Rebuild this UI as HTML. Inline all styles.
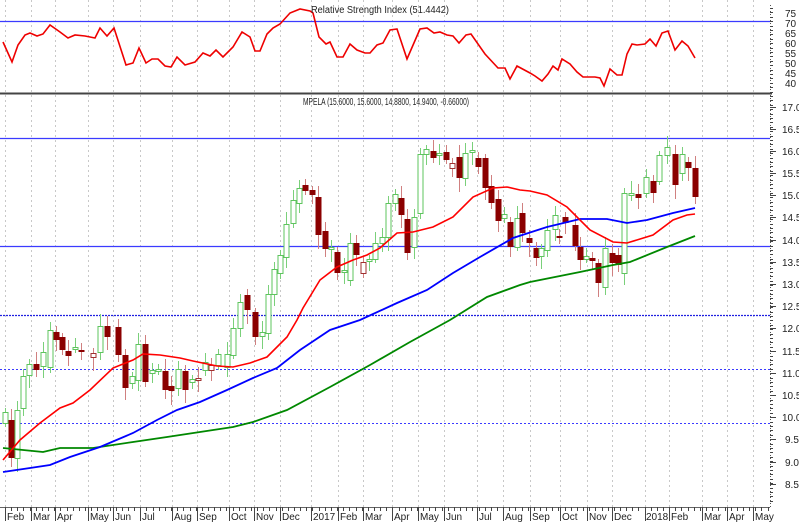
<!DOCTYPE html>
<html><head><meta charset="utf-8"><style>
html,body{margin:0;padding:0;background:#fff;width:799px;height:523px;overflow:hidden}
svg{display:block}
text{font-family:"Liberation Sans",Arial,sans-serif;font-size:10px;fill:#222}
</style></head><body>
<svg id="c" width="799" height="523" viewBox="0 0 799 523" xmlns="http://www.w3.org/2000/svg">
<rect width="799" height="523" fill="#fff"/>
<g id="grid" stroke="#c8c8c8" stroke-width="1" stroke-dasharray="2,3"></g>
<line x1="0" y1="21.5" x2="770" y2="21.5" stroke="#3b3bff" stroke-width="1.3"/>
<line x1="0" y1="93.5" x2="772" y2="93.5" stroke="#444" stroke-width="2"/>
<line x1="0" y1="138.5" x2="770" y2="138.5" stroke="#3b3bff" stroke-width="1.3"/>
<line x1="0" y1="246.5" x2="770" y2="246.5" stroke="#3b3bff" stroke-width="1.3"/>
<line x1="0" y1="315.5" x2="770" y2="315.5" stroke="#2020e0" stroke-width="1.3" stroke-dasharray="2,1"/>
<line x1="0" y1="369.5" x2="770" y2="369.5" stroke="#3b3bff" stroke-width="1" stroke-dasharray="2,2"/>
<line x1="0" y1="423.5" x2="770" y2="423.5" stroke="#3b3bff" stroke-width="1" stroke-dasharray="2,2"/>
<line x1="0" y1="507.5" x2="770" y2="507.5" stroke="#666"/>
<line x1="770.5" y1="5" x2="770.5" y2="507" stroke="#555" stroke-dasharray="1,2"/>
<g id="cand"></g>
<polyline fill="none" stroke="#e00" stroke-width="1.6" points="3,42 12,62 18,45 25,35 30,33 37,36 43,34 50,25 60,32 68,38 75,35 85,36 95,38 100,28 107,36 114,28 126,65 133,63 139,48 146,63 152,59 158,59 165,66 171,67 177,57 185,65 195,62 203,53 210,56 216,50 223,57 233,47 242,32 250,37 255,51 260,51 267,34 273,28 280,24 290,13 300,9 310,11 313,13 319,37 326,44 330,42 337,57 343,57 350,44 357,50 365,53 370,53 377,45 383,43 390,30 397,29 407,59 420,29 427,28 434,33 440,32 447,35 453,36 459,43 466,35 471,34 485,54 498,68 505,68 510,79 517,66 530,73 535,76 542,81 548,74 553,66 558,70 562,59 570,64 577,72 583,77 595,77 600,78 604,86 610,69 617,75 622,75 627,54 632,44 637,45 645,44 650,39 656,46 662,33 668,31 675,50 682,41 688,46 695,58"/>
<polyline fill="none" stroke="#080" stroke-width="1.8" points="3,448 43,452 60,448 93,448 133,442 167,437 200,432 233,427 253,422 287,410 330,387 370,365 410,342 450,320 487,297 520,285 530,282 580,272 613,265 630,262 667,247 695,236"/>
<polyline fill="none" stroke="#00f" stroke-width="1.8" points="3,472 30,468 50,465 70,457 100,447 133,433 157,420 177,410 200,402 227,390 253,378 277,368 300,350 330,330 360,320 397,303 427,290 453,273 480,257 513,238 547,227 580,219 607,219 627,223 647,220 673,213 695,208"/>
<polyline fill="none" stroke="#f00" stroke-width="1.6" points="3,460 20,440 40,423 60,408 73,403 90,390 113,368 133,360 143,354 160,355 180,358 193,361 217,366 233,367 250,363 267,357 287,337 297,320 303,308 320,280 337,267 353,260 367,255 380,248 397,233 413,232 433,227 453,217 473,197 493,188 507,187 520,190 530,191 547,195 567,207 590,230 613,242 627,243 653,235 673,220 687,215 695,214"/>
<g id="ticks" stroke="#444"></g>
<text x="380" y="13" text-anchor="middle" textLength="138" lengthAdjust="spacingAndGlyphs">Relative Strength Index (51.4442)</text>
<text x="303" y="105" textLength="166" lengthAdjust="spacingAndGlyphs">MPELA (15.6000, 15.6000, 14.8800, 14.9400, -0.66000)</text>
<g text-anchor="start">
<text x="785" y="17">75</text><text x="785" y="27">70</text><text x="785" y="37">65</text><text x="785" y="47">60</text><text x="785" y="57">55</text><text x="785" y="67">50</text><text x="785" y="77">45</text><text x="785" y="87">40</text>
<text x="782" y="111">17.0</text><text x="782" y="133">16.5</text><text x="782" y="155">16.0</text><text x="782" y="177">15.5</text><text x="782" y="199">15.0</text><text x="782" y="221">14.5</text><text x="782" y="244">14.0</text><text x="782" y="266">13.5</text><text x="782" y="288">13.0</text><text x="782" y="310">12.5</text><text x="782" y="332">12.0</text><text x="782" y="355">11.5</text><text x="782" y="377">11.0</text><text x="782" y="399">10.5</text><text x="782" y="421">10.0</text><text x="785" y="443">9.5</text><text x="785" y="466">9.0</text><text x="785" y="488">8.5</text>
</g>
<g>
<text x="7" y="520">Feb</text><text x="33" y="520">Mar</text><text x="57" y="520">Apr</text><text x="90" y="520">May</text><text x="115" y="520">Jun</text><text x="142" y="520">Jul</text><text x="174" y="520">Aug</text><text x="199" y="520">Sep</text><text x="231" y="520">Oct</text><text x="256" y="520">Nov</text><text x="282" y="520">Dec</text><text x="313" y="520">2017</text><text x="340" y="520">Feb</text><text x="365" y="520">Mar</text><text x="394" y="520">Apr</text><text x="420" y="520">May</text><text x="446" y="520">Jun</text><text x="479" y="520">Jul</text><text x="505" y="520">Aug</text><text x="532" y="520">Sep</text><text x="562" y="520">Oct</text><text x="589" y="520">Nov</text><text x="614" y="520">Dec</text><text x="646" y="520">2018</text><text x="671" y="520">Feb</text><text x="704" y="520">Mar</text><text x="729" y="520">Apr</text><text x="755" y="520">May</text>
</g>
</svg>
<script>
var NS="http://www.w3.org/2000/svg";
function el(p,t,a){var e=document.createElementNS(NS,t);for(var k in a)e.setAttribute(k,a[k]);p.appendChild(e);return e;}
var months=[5,31,55,88,113,140,172,197,229,254,280,311,338,363,392,418,444,477,503,530,560,587,612,645,669,702,727,753];
var g=document.getElementById('grid'),tk=document.getElementById('ticks');
months.forEach(function(x){el(g,'line',{x1:x+.5,y1:0,x2:x+.5,y2:507});el(tk,'line',{x1:x+.5,y1:507,x2:x+.5,y2:521});});
for(var x=5;x<770;x+=6.15){el(tk,'line',{x1:Math.round(x)+.5,y1:507,x2:Math.round(x)+.5,y2:511});}
for(var y=8;y<505;y+=4.4){el(tk,'line',{x1:770,y1:Math.round(y)+.5,x2:773,y2:Math.round(y)+.5});}
[107,129,151,173,195,217,240,262,284,306,328,351,373,395,417,439,462,484].forEach(function(y){el(tk,'line',{x1:770,y1:y+.5,x2:776,y2:y+.5});});
var C=[[5,412,423,1],[11,420,458,0],[17,410,458,1],[23,376,408,1],[29,364,375,1],[36,364,370,0],[43,352,366,1],[50,330,367,1],[56,332,340,0],[62,337,350,0],[68,351,356,0],[75,347,349,1],[81,350,351,0],[93,353,357,2],[100,326,352,1],[107,326,337,0],[118,327,355,0],[125,355,388,0],[132,376,383,1],[138,344,380,1],[145,344,382,0],[152,370,373,1],[158,369,371,1],[165,371,390,0],[171,386,391,0],[178,369,388,1],[185,371,390,0],[192,379,382,1],[198,378,380,2],[205,362,370,1],[211,365,370,2],[218,354,365,1],[227,354,367,1],[233,328,355,1],[240,302,328,1],[247,295,310,0],[255,312,337,0],[262,332,336,1],[268,294,333,1],[274,269,294,1],[280,255,273,1],[286,224,257,1],[293,200,223,1],[299,188,203,1],[305,185,191,0],[312,190,195,0],[318,197,235,0],[325,231,249,0],[331,247,249,1],[337,252,273,0],[344,270,272,1],[350,243,280,1],[356,243,255,0],[363,262,273,2],[369,259,261,1],[375,243,259,1],[382,237,243,1],[388,203,237,1],[395,194,203,1],[401,198,215,0],[407,219,253,0],[414,217,247,1],[420,154,213,1],[426,149,154,1],[433,151,158,0],[439,153,155,1],[446,152,160,0],[452,163,168,2],[459,157,178,0],[465,153,178,1],[472,150,152,1],[478,158,167,0],[485,158,188,0],[491,186,203,0],[498,199,221,0],[504,214,218,1],[510,222,247,0],[517,218,247,1],[522,213,233,0],[529,238,243,0],[536,248,258,0],[541,248,256,1],[547,230,250,1],[555,215,229,1],[559,236,238,0],[565,217,223,0],[575,225,246,0],[580,247,260,0],[586,256,259,1],[592,258,261,0],[598,263,283,0],[605,248,287,1],[612,253,263,0],[618,255,265,0],[624,193,273,1],[631,193,195,1],[638,194,198,0],[646,177,193,1],[653,181,193,0],[659,155,181,1],[667,147,155,1],[675,154,185,0],[682,154,173,1],[688,162,168,0],[695,168,197,0]];
var cg=document.getElementById('cand');
C.forEach(function(c,i){var x=c[0],t=c[1],b=c[2],u=c[3];var h=t-4-(i*7%9),l=b+4+(i*5%11);
var col=u==1?'#5ec45e':'#8b0000',wc=u==1?'#7ad07a':'#d08080';
el(cg,'line',{x1:x+.5,y1:h,x2:x+.5,y2:l,stroke:wc,'stroke-width':1});
if(u==1)el(cg,'rect',{x:x-2,y:t+.5,width:5,height:Math.max(b-t,1),fill:'#fff',stroke:col,'stroke-width':1});
else if(u==2)el(cg,'rect',{x:x-2,y:t+.5,width:5,height:Math.max(b-t,1),fill:'#fff',stroke:'#a03030','stroke-width':1});
else el(cg,'rect',{x:x-2.5,y:t,width:6,height:Math.max(b-t,2),fill:col});});
</script>
</body></html>
